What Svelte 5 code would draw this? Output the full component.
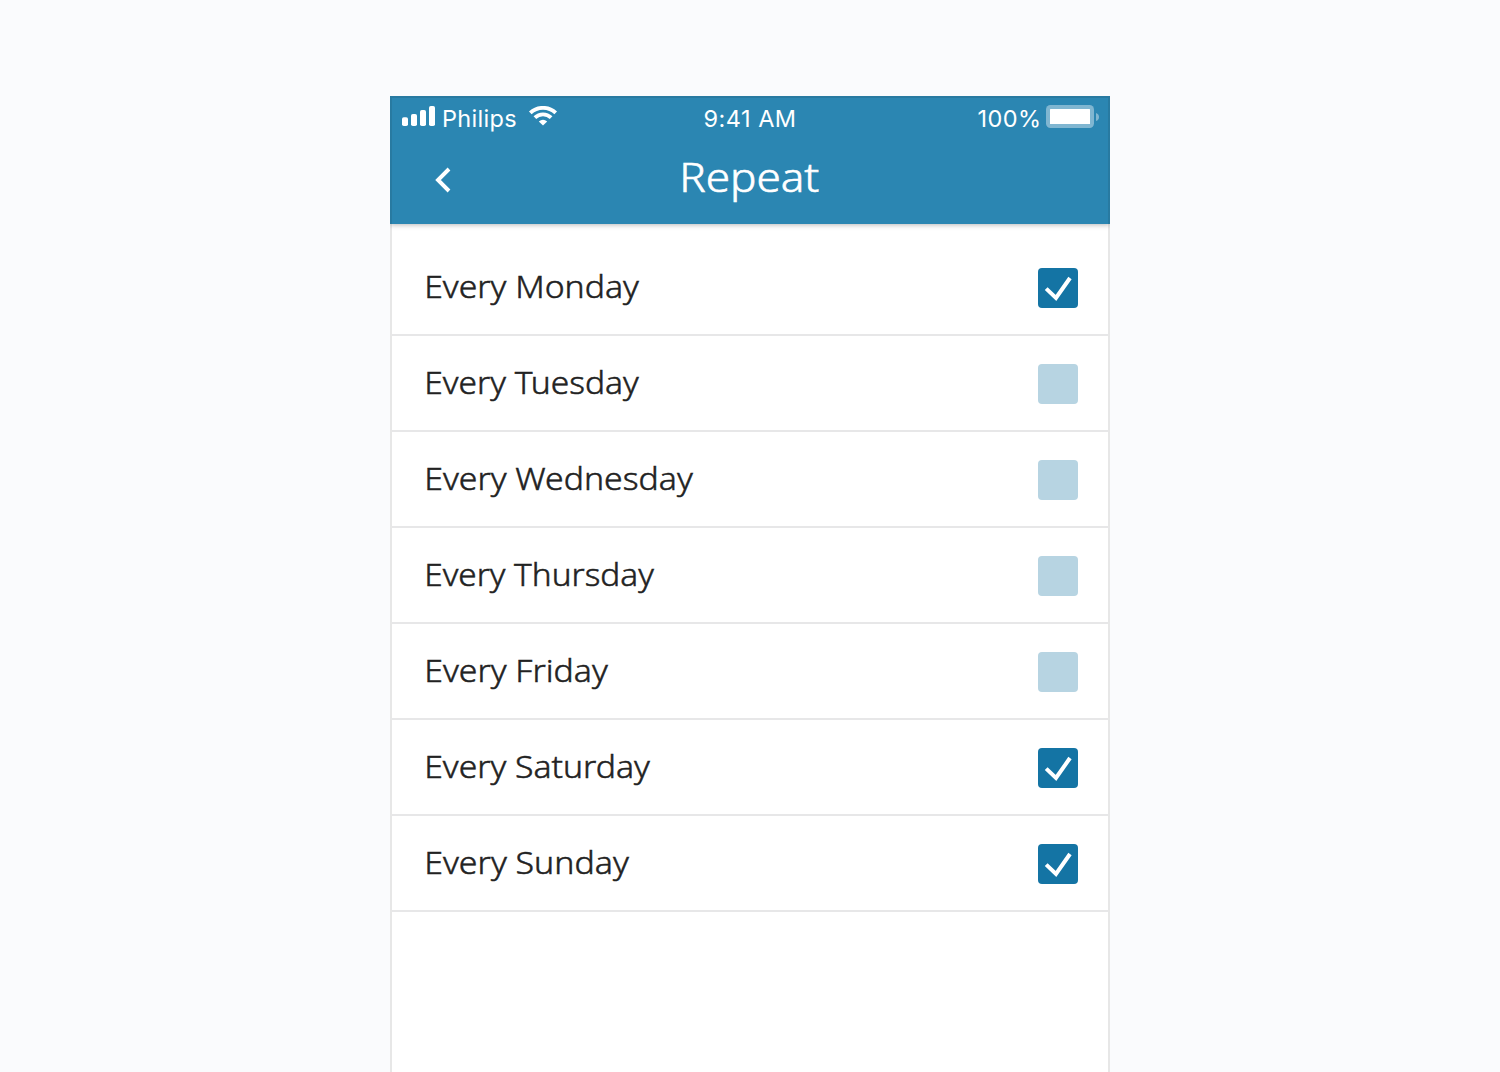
<script>
  // width: drawn length of each label in pixels
  let days = $state([
    { label: 'Every Monday', width: 212, on: true },
    { label: 'Every Tuesday', width: 212, on: false },
    { label: 'Every Wednesday', width: 266, on: false },
    { label: 'Every Thursday', width: 227, on: false },
    { label: 'Every Friday', width: 181, on: false },
    { label: 'Every Saturday', width: 223, on: true },
    { label: 'Every Sunday', width: 202, on: true }
  ]);
</script>

<main class="page">
  <div class="phone">
    <header class="header">
      <div class="status">
        <div class="carrier">
          <svg width="34" height="20" viewBox="0 0 34 20" fill="#fff">
            <rect x="0" y="11.3" width="6" height="8.7" rx="1.8" />
            <rect x="9" y="8" width="6" height="12" rx="1.8" />
            <rect x="18" y="4" width="6" height="16" rx="1.8" />
            <rect x="27" y="0" width="6" height="20" rx="1.8" />
          </svg>
          <span class="name">Philips</span>
          <svg class="wifi" width="30" height="21" viewBox="0 0 30 21">
            <g fill="none" stroke="#fff" stroke-width="3.8">
              <path d="M2.3 6.9A18.4 18.4 0 0 1 27.7 6.9" />
              <path d="M6.9 11.7A11.6 11.6 0 0 1 23.1 11.7" />
            </g>
            <path d="M15 19.6L10.8 15.6A6.6 6.6 0 0 1 19.2 15.6Z" fill="#fff" />
          </svg>
        </div>
        <span class="time">9:41 AM</span>
        <div class="power">
          <span class="percent">100%</span>
          <svg width="54" height="23" viewBox="0 0 54 23">
            <rect width="48" height="23" rx="4.5" fill="#80b6d1" />
            <rect x="4" y="4" width="40" height="15" rx="0.6" fill="#fff" />
            <path d="M50 8Q53 9 53 12T50 16Z" fill="#80b6d1" />
          </svg>
        </div>
      </div>
      <div class="nav">
        <button class="back" aria-label="Back">
          <svg width="16" height="26" viewBox="0 0 16 26">
            <path d="M14 2L3 13L14 24" fill="none" stroke="#fff" stroke-width="3.9" />
          </svg>
        </button>
        <svg class="title" width="140" height="60">
          <text x="-0.7" y="42" textLength="140" lengthAdjust="spacingAndGlyphs">Repeat</text>
        </svg>
        <span></span>
      </div>
    </header>

    <ul class="list">
      {#each days as day}
        <li class="row">
          <svg class="label" width="300" height="60">
            <text x="-1.8" y="40.5" textLength={day.width + 2.6} lengthAdjust="spacingAndGlyphs">{day.label}</text>
          </svg>
          <button
            class="box"
            class:on={day.on}
            role="checkbox"
            aria-checked={day.on}
            aria-label={day.label}
            onclick={() => (day.on = !day.on)}
          >
            {#if day.on}
              <svg width="40" height="40" viewBox="0 0 40 40">
                <path d="M8.2 20.6L18 30L32 10" fill="none" stroke="#fff" stroke-width="4" />
              </svg>
            {/if}
          </button>
        </li>
      {/each}
    </ul>
  </div>
</main>

<style>
  :global(body) {
    margin: 0;
    background: #fafbfd;
  }
  .page {
    box-sizing: border-box;
    height: 1072px;
    padding-top: 96px;
    display: flex;
    justify-content: center;
    overflow: hidden;
  }
  .phone {
    position: relative;
    width: 720px;
    height: 1100px;
    background: #fff;
  }
  /* Translucent frame over the header and the list */
  .phone::after {
    content: '';
    position: absolute;
    inset: 0;
    border: 2px solid rgba(20, 20, 20, 0.1);
    pointer-events: none;
  }
  svg {
    display: block;
    flex: none;
  }
  .header {
    height: 128px;
    background: #2b86b2;
    box-shadow: 0 1px 5px rgba(0, 0, 0, 0.28);
    clip-path: inset(0 0 -10px 0);
    color: #fff;
  }
  .status {
    display: grid;
    grid-template-columns: 1fr auto 1fr;
    height: 40px;
    padding: 0 10px 0 12px;
    font: 400 24px/28px Inter, sans-serif;
  }
  .carrier,
  .power {
    display: flex;
    padding-top: 9px;
  }
  .carrier svg:first-child {
    margin-top: 1px;
  }
  .name,
  .percent,
  .time {
    font-size: 23.5px;
    font-weight: 370;
  }
  .name {
    width: 86px;
    margin-left: 6px;
    letter-spacing: 0.3px;
  }
  .wifi {
    margin-top: 0.5px;
  }
  .time {
    padding-top: 9px;
    margin-right: 2px;
    letter-spacing: 0.5px;
  }
  .power {
    justify-content: flex-end;
  }
  .percent {
    margin-right: 4.5px;
    letter-spacing: 0.4px;
  }
  .nav {
    display: grid;
    grid-template-columns: 1fr auto 1fr;
    align-items: center;
    height: 88px;
  }
  .back {
    width: max-content;
    margin-left: 45px;
    padding: 0;
    border: 0;
    background: none;
  }
  .title {
    overflow: visible;
  }
  /* A hairline stroke gives the light face a book weight */
  .title text {
    fill: #fff;
    stroke: #fff;
    stroke-width: 0.6px;
    font: 300 39.5px 'Noto Sans', sans-serif;
  }
  .list {
    margin: 0;
    padding: 16px 2px 0;
    list-style: none;
  }
  .row {
    box-sizing: border-box;
    height: 96px;
    padding: 0 30px 0 34px;
    display: flex;
    align-items: center;
    justify-content: space-between;
    border-bottom: 2px solid #e7e7e8;
  }
  .label {
    overflow: visible;
  }
  .label text {
    fill: #222;
    stroke: #222;
    stroke-width: 0.5px;
    font: 300 31.5px 'Noto Sans', sans-serif;
  }
  .box {
    width: 40px;
    height: 40px;
    margin-top: 2px;
    padding: 0;
    border: 0;
    border-radius: 4px;
    background: #b7d4e2;
  }
  .box.on {
    background: #1474a4;
  }
</style>
